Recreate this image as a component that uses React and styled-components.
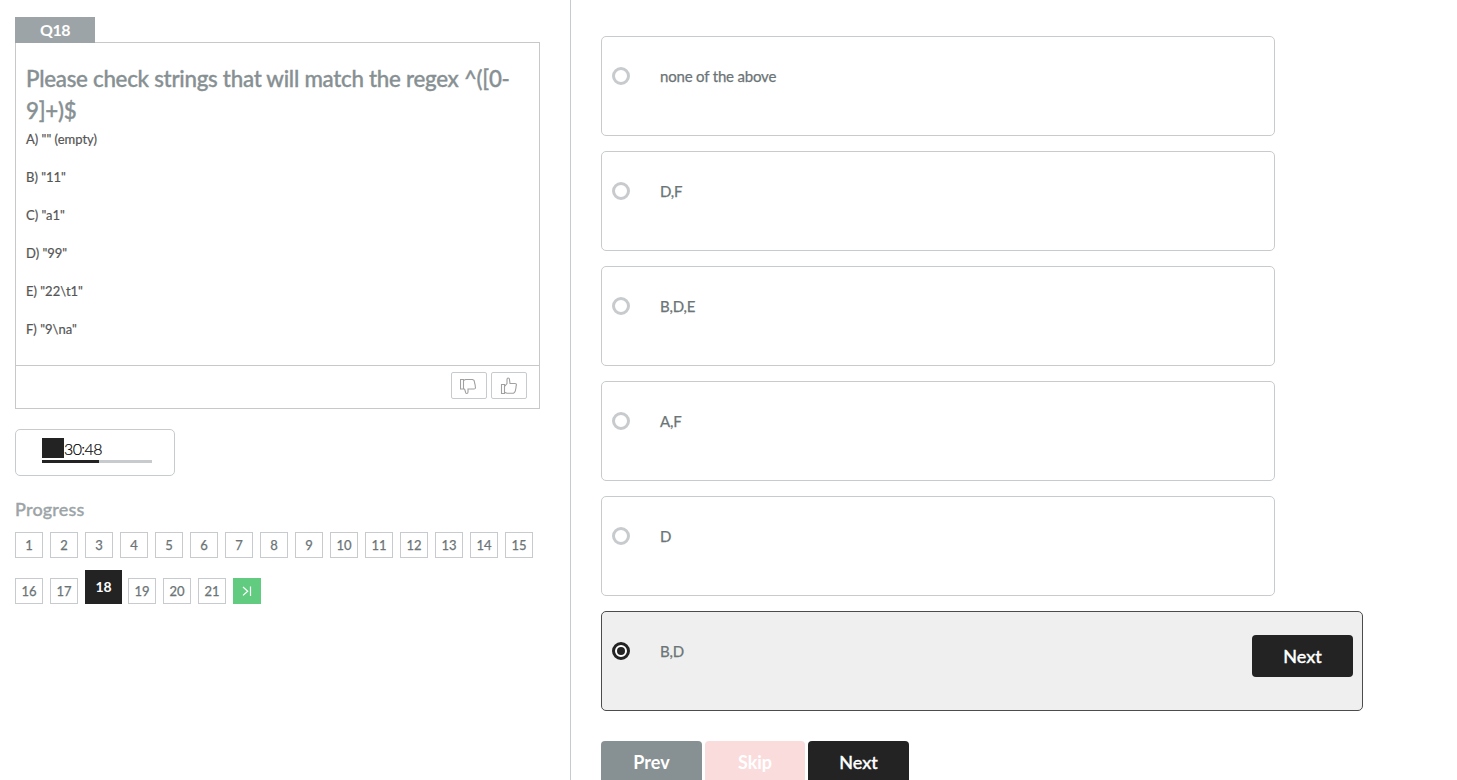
import React from 'react';
import styled, { createGlobalStyle, css } from 'styled-components';

const GlobalStyle = createGlobalStyle`
  * { box-sizing: border-box; }
  html, body { margin: 0; height: 100%; overflow: hidden; }
  body { background: #fff; font-family: Lato, "Liberation Sans", sans-serif; color: #6b7476; }
  button { font-family: inherit; margin: 0; padding: 0; }
`;

const Page = styled.div`
  display: flex;
  height: 780px;
  overflow: hidden;
`;

const Sidebar = styled.aside`
  flex: none;
  width: 571px;
  height: 780px;
  padding: 17px 30px 0 15px;
  border-right: 1px solid #c8cbcd;
`;

const QuestionTag = styled.div`
  position: relative;
  width: 80px;
  height: 26px;
  margin-bottom: -1px;
  background: #9ca4a7;
  color: #fff;
  font-size: 16px;
  font-weight: 700;
  letter-spacing: -0.5px;
  line-height: 26px;
  text-align: center;
`;

const QuestionCard = styled.section`
  width: 525px;
  height: 367px;
  border: 1px solid #c8c8c8;
  display: flex;
  flex-direction: column;
`;

const QuestionBody = styled.div`
  flex: 1;
  padding: 20px 10px 0;
`;

const QuestionTitle = styled.h1`
  margin: 0 0 3px;
  font-size: 22.300px;
  font-weight: 500;
  letter-spacing: -0.26px;
  line-height: 32px;
  color: #879093;
  white-space: nowrap;
  -webkit-text-stroke: 0.35px #879093;
`;

const Choice = styled.p`
  margin: 0 0 19px;
  font-size: 13px;
  line-height: 19px;
  color: #555;
  -webkit-text-stroke: 0.2px #555;
  white-space: pre;

  &:last-child { margin-bottom: 0; }
`;

const QuestionFooter = styled.div`
  flex: none;
  display: flex;
  justify-content: flex-end;
  gap: 4px;
  height: 43px;
  padding: 6px 12px 0 0;
  border-top: 1px solid #c8c8c8;
`;

const VoteButton = styled.button`
  display: flex;
  align-items: center;
  justify-content: center;
  width: 36px;
  height: 27px;
  border: 1px solid #c8cbcd;
  border-radius: 2px;
  background: #fff;
  svg { display: block; }
`;

const Timer = styled.div`
  width: 160px;
  height: 47px;
  margin-top: 20px;
  padding: 8px 0 0 26px;
  border: 1px solid #c8cbcd;
  border-radius: 5px;
`;

const TimerValue = styled.div`
  display: flex;
  height: 20px;
  color: #000;
  font-size: 16px;
  font-weight: 300;
  letter-spacing: -0.6px;
  line-height: 22px;
  -webkit-text-stroke: 0.2px #000;
`;

const HiddenHours = styled.span`
  width: 22px;
  height: 20px;
  background: #232323;
`;

const TimerTrack = styled.div`
  width: 110px;
  height: 3px;
  margin-top: 2px;
  background: #c8cbcd;
`;

const TimerFill = styled.div`
  height: 3px;
  background: #232323;
`;

const ProgressTitle = styled.h2`
  margin: 21px 0 0;
  height: 25px;
  font-size: 18px;
  font-weight: 500;
  letter-spacing: 0.2px;
  line-height: 24px;
  color: #9ca4a7;
  -webkit-text-stroke: 0.35px #9ca4a7;
`;

const Steps = styled.div`
  display: flex;
  align-items: flex-end;
  gap: 7px;
  height: ${p => p.$height}px;
`;

const Step = styled.button`
  display: flex;
  align-items: center;
  justify-content: center;
  width: 28px;
  height: 26px;
  border: 1px solid #c8cbcd;
  background: #fff;
  color: #6b7476;
  font-size: 13px;
  font-weight: 400;
  line-height: 24px;
  -webkit-text-stroke: 0.25px #6b7476;
  ${p => p.$current && css`
    width: 37px;
    height: 34px;
    margin-right: -1px;
    border-color: #232323;
    background: #232323;
    color: #fff;
    font-size: 14px;
    font-weight: 700;
    -webkit-text-stroke: 0;
  `}
  ${p => p.$last && css`
    border-color: #61cc80;
    background: #61cc80;
  `}
`;

const Answers = styled.main`
  flex: 1;
  display: flex;
  flex-direction: column;
  gap: 15px;
  padding: 36px 0 0 30px;
`;

const AnswerCard = styled.label`
  flex: none;
  display: flex;
  align-items: flex-start;
  width: ${p => (p.$selected ? 762 : 674)}px;
  height: 100px;
  padding: 0 9px 0 10px;
  border: 1px solid ${p => (p.$selected ? '#4c4c4c' : '#c8cbcd')};
  border-radius: 5px;
  background: ${p => (p.$selected ? '#efefef' : '#fff')};
`;

const Radio = styled.span`
  display: flex;
  align-items: center;
  justify-content: center;
  width: 18px;
  height: 18px;
  margin-top: 30px;
  border: 3px solid ${p => (p.$selected ? '#232323' : '#c8cbcd')};
  border-radius: 50%;
  background: #fff;
`;

const RadioDot = styled.span`
  width: 8px;
  height: 8px;
  border-radius: 50%;
  background: #232323;
`;

const AnswerText = styled.span`
  flex: 1;
  margin: 29px 0 0 30px;
  font-size: 15px;
  letter-spacing: -0.18px;
  line-height: 20px;
  color: #6b7476;
  -webkit-text-stroke: 0.25px #6b7476;
`;

const Actions = styled.div`
  display: flex;
  gap: 3px;
  margin-top: 15px;
`;

const tones = { dark: '#232323', gray: '#879093', pink: '#fadcdc' };

const ActionButton = styled.button`
  flex: none;
  width: ${p => p.$width || 101}px;
  height: 42px;
  margin-top: ${p => (p.$inline ? 23 : 0)}px;
  border: 0;
  border-radius: 4px;
  background: ${p => tones[p.$tone]};
  color: #fff;
  font-size: 18px;
  font-weight: ${p => (p.$tone === 'dark' ? 500 : 700)};
  line-height: 42px;
  -webkit-text-stroke: ${p => (p.$tone === 'dark' ? 0.35 : 0)}px #fff;
`;

const ThumbUp = () => (
  <svg width="18" height="18" viewBox="0 0 18 18" fill="none" stroke="#a0a0a0" strokeWidth="1.100">
    <path d="M1.500 7.500h3v9h-3zM4.500 9.500L7 6.500V2.500Q7 1 8.200 1q1.300 0 1.300 1.700L10 6.500h5q1.500.1 1.500 1.200l-.5 1.800v1.300l-.4 1.500-.2 1.500-.9 1.700-1 .8H7l-2.500-1" />
  </svg>
);

const ThumbDown = () => (
  <svg width="18" height="18" viewBox="0 0 18 18" fill="none" stroke="#a0a0a0" strokeWidth="1.100">
    <path d="M.5 2.500h3v9.500h-3zM3.500 3.500L5.500 2.500h7l1.500.8.5 1.700.2 1.500.5 1.500.1 1.500.2 1.500q-.2.900-1.500 1H8v3q0 1.500-1.300 1.500-1.200 0-1.200-1.500l-.7-2.500-1.300-1" />
  </svg>
);

const SkipToEnd = () => (
  <svg width="12" height="12" viewBox="0 0 12 12" fill="none" stroke="#fff" strokeWidth="1.200">
    <path d="M2 2l4.700 4.200L2 10.400M9.500 1.500v9.500" />
  </svg>
);

const choices = ['A) "" (empty)', 'B) "11"', 'C) "a1"', 'D) "99"', 'E) "22\\t1"', 'F) "9\\na"'];
const answers = ['none of the above', 'D,F', 'B,D,E', 'A,F', 'D', 'B,D'];
const firstRow = Array.from({ length: 15 }, (_, i) => i + 1);
const secondRow = [16, 17, 18, 19, 20, 21];
const current = 18;
const elapsed = 52;

export default function App() {
  return (
    <Page>
      <GlobalStyle />
      <Sidebar>
        <QuestionTag>Q18</QuestionTag>
        <QuestionCard>
          <QuestionBody>
            <QuestionTitle>Please check strings that will match the regex ^([0-<br />9]+)$</QuestionTitle>
            {choices.map(c => <Choice key={c}>{c}</Choice>)}
          </QuestionBody>
          <QuestionFooter>
            <VoteButton aria-label="Dislike"><ThumbDown /></VoteButton>
            <VoteButton aria-label="Like"><ThumbUp /></VoteButton>
          </QuestionFooter>
        </QuestionCard>
        <Timer>
          <TimerValue><HiddenHours />30:48</TimerValue>
          <TimerTrack><TimerFill style={{ width: `${elapsed}%` }} /></TimerTrack>
        </Timer>
        <ProgressTitle>Progress</ProgressTitle>
        <Steps $height={36}>
          {firstRow.map(n => <Step key={n}>{n}</Step>)}
        </Steps>
        <Steps $height={46}>
          {secondRow.map(n => <Step key={n} $current={n === current}>{n}</Step>)}
          <Step $last aria-label="Last"><SkipToEnd /></Step>
        </Steps>
      </Sidebar>
      <Answers>
        {answers.map(a => {
          const selected = a === 'B,D';
          return (
            <AnswerCard key={a} $selected={selected}>
              <Radio $selected={selected}>{selected && <RadioDot />}</Radio>
              <AnswerText>{a}</AnswerText>
              {selected && <ActionButton $tone="dark" $inline>Next</ActionButton>}
            </AnswerCard>
          );
        })}
        <Actions>
          <ActionButton $tone="gray">Prev</ActionButton>
          <ActionButton $tone="pink" $width={100}>Skip</ActionButton>
          <ActionButton $tone="dark">Next</ActionButton>
        </Actions>
      </Answers>
    </Page>
  );
}
